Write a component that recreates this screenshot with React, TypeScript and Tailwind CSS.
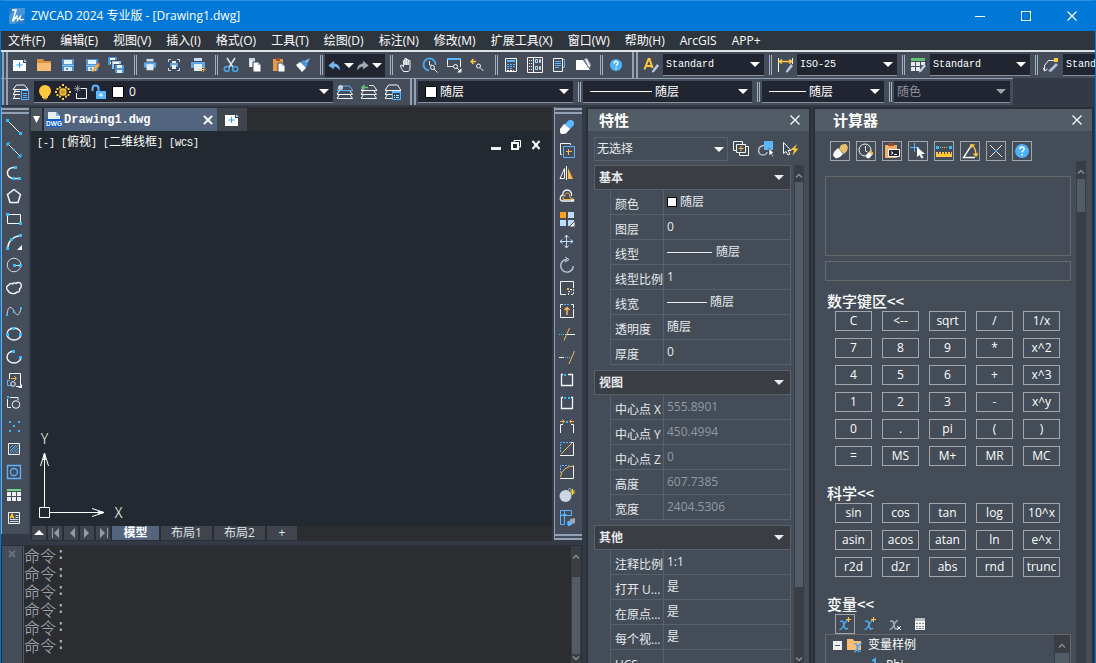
import React from "react";

type IconProps = { children: React.ReactNode; className?: string };

function Ico({ children, className = "size-4" }: IconProps) {
  return (
    <svg viewBox="0 0 16 16" className={`shrink-0 ${className}`} fill="none" stroke="#f4f6f8" strokeWidth="1" aria-hidden="true">
      {children}
    </svg>
  );
}

const B = "#5bb5ff";
const C = "#33bdfc";
const L = "#bfdcf8";
const O = "#f7b64f";
const Y = "#ffc83d";
const W = "#f4f6f8";

function Dots({ at, s = 3 }: { at: number[][]; s?: number }) {
  return (
    <>
      {at.map(([x, y]) => (
        <rect key={`${x}-${y}`} x={x - s / 2} y={y - s / 2} width={s} height={s} fill={C} stroke="none" />
      ))}
    </>
  );
}

const floppy = (
  <g stroke="none">
    <path d="M2 2h12v12H2z" fill="#4b95d8" />
    <path d="M4 3h8v4H4z" fill="#e9f1fa" />
    <path d="M2 8h12v1H2z" fill="#8cc2f2" />
    <path d="M4 10h8v4H4z" fill="#dbe9f7" />
    <path d="M6 11h2v2H6z" fill="#4b95d8" />
  </g>
);
const printer = (
  <g stroke="none">
    <path d="M4 1h8v3H4z" fill="#c5ddf5" />
    <path d="M1 5h14v6H1z" fill="#5fa6e2" />
    <path d="M4 7h8v7H4z" fill="#e0ecf8" />
  </g>
);
const pencil = (
  <g stroke="none">
    <path d="M9 14l5-7 2 2-5 6-2 .5z" fill="#b9cbe4" />
  </g>
);

const I = {
  newFile: (
    <>
      <path d="M1 3h10v3h3v8H1z" fill="#fff" stroke="none" />
      <path d="M12 2l3 3h-3z" fill="#9fc9f3" stroke="none" />
      <path d="M7.500 5v6M4.500 8h6" stroke="#2f9cf0" />
    </>
  ),
  open: (
    <g stroke="none">
      <path d="M1 2h6l1 2h7v10H1z" fill="#dd9243" />
      <path d="M1 6h14v8H1z" fill="#f9bc74" />
    </g>
  ),
  save: floppy,
  saveAs: (
    <>
      {floppy}
      <path d="M8 15l1-3 5-6 2 2-5 6z" fill="#f7a93b" stroke="none" />
      <path d="M13 7l1-2 2 2-1 1z" fill="#e75d4e" stroke="none" />
    </>
  ),
  saveAll: (
    <g stroke="none">
      <path d="M0 0h9v8H0z" fill="#4b95d8" />
      <path d="M2 1h5v2H2zM2 5h2v2H2z" fill="#fff" />
      <path d="M3 3h10v9H3z" fill="#464d5a" />
      <path d="M4 4h9v8H4z" fill="#8cc2f2" />
      <path d="M5 5h6v2H5z" fill="#fff" />
      <path d="M6 7h10v9H6z" fill="#464d5a" />
      <path d="M7 8h9v8H7z" fill="#4b95d8" />
      <path d="M9 8h5v3H9zM9 13h5v3H9z" fill="#e6f0fa" />
    </g>
  ),
  print: printer,
  preview: (
    <>
      <path d="M2.500 5V2.500H5M11 2.500h2.500V5M13.500 11v2.500H11M5 13.500H2.500V11" stroke={L} />
      <path d="M4 6h8v4H4z" fill="#5fa6e2" stroke="none" />
      <path d="M6 4h4v2H6zM6 8h4v4H6z" fill="#e6f0fa" stroke="none" />
    </>
  ),
  publish: (
    <>
      {printer}
      <path d="M9 12.500h5M12.500 10l2.500 2.500-2.500 2.500" stroke={Y} />
    </>
  ),
  cut: (
    <>
      <path d="M4 1l6.500 10M12 1L5.500 11" stroke="#dce3ea" strokeWidth="1.500" />
      <circle cx="3.800" cy="12" r="2.500" stroke="#4da3e8" strokeWidth="1.500" />
      <circle cx="12.200" cy="12" r="2.500" stroke="#4da3e8" strokeWidth="1.500" />
    </>
  ),
  copy: (
    <g stroke="none">
      <path d="M2 1h6v9H2z" fill="#c9d3de" />
      <path d="M3 3h2v7H3z" fill="#f4f6f8" />
      <path d="M6 5h5l3 3v7H6z" fill="#fff" stroke="#464d5a" />
      <path d="M11 5l3 3h-3z" fill="#9eaebf" />
    </g>
  ),
  paste: (
    <g stroke="none">
      <path d="M2 2h10v12H2z" fill="#e39a4a" />
      <path d="M5 1h4v3H5z" fill="#9c5228" />
      <path d="M7 6h4l3 3v6H7z" fill="#fff" stroke="#464d5a" />
      <path d="M11 6l3 3h-3z" fill="#9eaebf" />
    </g>
  ),
  match: (
    <g stroke="none">
      <path d="M15 1l-6 3 3 3z" fill="#77b8ee" />
      <path d="M8 3l5 5-3 3-5-5z" fill="#4b95d8" />
      <path d="M5 5l6 6-4 4-6-7z" fill="#fff" />
    </g>
  ),
  undo: <path d="M14 13c0-5-3-7-7-7V3L1 8l6 4V9c3 0 5 1 7 4z" fill="#79b7f3" stroke="#79b7f3" />,
  redo: <path d="M2 13c0-5 3-7 7-7V3l6 5-6 4V9c-3 0-5 1-7 4z" fill="#a5abb2" stroke="#a5abb2" />,
  pan: (
    <path
      d="M5.500 14.500C4 12 2.500 10.500 2.500 8.500l1.500-.5 1.500 2V3.500l1.500-1V8 1.500h1.500V8 2.500H10V8l.5-4.500H12V11c0 2-1 2.500-1.500 3.500z"
      strokeLinejoin="round"
    />
  ),
  zoomRt: (
    <>
      <path d="M7 13.500A6 6 0 1 1 13.500 8" stroke="#4da3e8" strokeWidth="2" />
      <path d="M7.500 4v4h2" />
      <circle cx="10.500" cy="10.500" r="2" />
      <path d="M12 12l3.500 3.500" />
    </>
  ),
  zoomWin: (
    <>
      <path d="M1.500 8.500V2.500M1 2.500h13M14.500 3v7M1 9.500h6" />
      <path d="M1 2h14" stroke={B} strokeWidth="2" />
      <circle cx="9.500" cy="9.500" r="2" />
      <path d="M11 11l3 3" />
      <path d="M15.500 11v4.500H11z" fill={W} stroke="none" />
    </>
  ),
  zoomPrev: (
    <>
      <path d="M1 4.500h5M3.500 2L1 4.500 3.500 7" stroke={Y} strokeWidth="1.300" />
      <circle cx="8.500" cy="9" r="2" />
      <path d="M10 10.500l3.500 3.500" />
    </>
  ),
  props: (
    <>
      <path d="M2.500 1.500h11v13h-11z" />
      <path d="M4 4h8" stroke={B} strokeWidth="2" />
      <path d="M4 7.500h8M4 9.500h8M4 11.500h6" stroke={B} strokeDasharray="2 1" />
      <path d="M4 13.500h7" strokeDasharray="2 1" />
    </>
  ),
  center: (
    <>
      <path d="M.5.500h15v15H.5zM6.500.500v15" />
      <path d="M2 3.500h3M2 6.500h3M2 9.500h3M2 12.500h3" strokeDasharray="1 1" />
      <path d="M8.500 2.500h2v3h-2zM12.500 2.500h1v3h-1zM8.500 9.500h2v3h-2zM12.500 9.500h1v3h-1z" stroke={L} />
    </>
  ),
  palette: (
    <>
      <path d="M2.500 1.500h9v13h-9z" />
      <path d="M12 2.500h1.500v8H12" stroke={B} />
      <path d="M4 4.500h6M4 6.500h6M4 8.500h6M4 10.500h4" stroke={B} />
    </>
  ),
  markup: (
    <>
      <path d="M1 3h7l7 10H1z" fill="#fff" stroke="none" />
      <path d="M9 2l3-1 4 7-1 3-2-1z" fill="#dfe4ea" stroke="#70777f" />
    </>
  ),
  help: (
    <>
      <circle cx="8" cy="8" r="7" fill="#4fb0fb" stroke="none" />
      <path d="M5.800 6.300c0-3 4.400-3 4.400-.3 0 1.600-2.200 1.700-2.200 3.500M8 11v1.500" strokeWidth="1.500" stroke="#fff" />
    </>
  ),
  textStyle: (
    <>
      <path d="M1.500 12.500L5.500 2h1l3 9M3 9h5" stroke={Y} strokeWidth="2" />
      {pencil}
    </>
  ),
  dimStyle: (
    <>
      <path d="M1.500 1v14M15.500 1v6" />
      <path d="M2 4.500h13M5 2.500l-3 2 3 2M12 2.500l3 2-3 2" stroke={Y} strokeWidth="1.500" />
      {pencil}
    </>
  ),
  tableStyle: (
    <>
      <path d="M1 2.500h14" stroke="#62c276" strokeWidth="3" />
      <path d="M1 5h4v4H1zM6 5h4v4H6zM11 5h4v3h-4zM1 10h4v4H1zM6 10h4v4H6z" fill="#e6e9ec" stroke="none" />
      {pencil}
    </>
  ),
  leader: (
    <>
      <path d="M1.500 14V8.500l4-5h6M.5 11l1 3 3-2" />
      <path d="M11 1h4v4h-4z" fill={Y} stroke="none" />
      <path d="M5 14l8-8 2 2-7 7z" fill="#a9bfdb" stroke="none" />
    </>
  ),
  layers: (
    <>
      <path d="M0 5.500L3.500 1h8L15 5.500zM1 7.500h6M0 10.500h7M2.500 5.500L.5 10.500M0 14.500h7M2.500 10.500l-2 4" />
      <path d="M8.500 6.500h7v9h-7z" fill="#35425a" stroke={B} />
      <path d="M10 9.500h4M10 11.500h4M10 13.500h4" stroke={B} />
    </>
  ),
  bulb: (
    <g stroke="none">
      <circle cx="8" cy="7" r="6" fill={Y} />
      <path d="M5 11h6v3H5z" fill={Y} />
      <path d="M6 14h4v1.500H6z" fill="#c58e1c" />
    </g>
  ),
  sun: (
    <>
      <circle cx="8" cy="8" r="3" stroke={Y} strokeWidth="1.300" fill="#c99a2f" />
      <path d="M7 0h2v2H7zM7 14h2v2H7zM0 7h2v2H0zM14 7h2v2h-2zM4 2.500h2v2H4zM10 2.500h2v2h-2zM4 11.500h2v2H4zM10 11.500h2v2h-2zM1.500 4h2v2h-2zM12.500 4h2v2h-2zM1.500 10h2v2h-2zM12.500 10h2v2h-2z" fill={Y} stroke="none" />
    </>
  ),
  vpFreeze: (
    <>
      <path d="M8 4.500h5.500v10h-10V9" />
      <path d="M4.500 1v7M1 4.500h7M2 2l5 5M7 2L2 7" stroke="#aeb4bd" strokeWidth=".7" />
    </>
  ),
  unlock: (
    <>
      <path d="M1.500 7V4.500a3 3 0 0 1 6 0V7" stroke={B} strokeWidth="2" />
      <path d="M5 7h10v8H5z" fill={B} stroke="none" />
      <path d="M10 9v4M8 11h4" stroke="#fff" />
    </>
  ),
  layCur: (
    <>
      <path d="M0 6.500L3.500 2h9L16 6.500z" stroke={B} />
      <circle cx="3.500" cy="3.500" r="2.500" fill="#c4d0df" stroke="none" />
      <path d="M2.500 6.500L0 10.500h15.500L13 7M2.500 10.500l-2.500 4h15.500l-2.500-4" />
    </>
  ),
  layPrev: (
    <>
      <path d="M8 1.500h4.500L16 6.500H0L2 4M2.500 6.500L0 10.500h15.500L13 7M2.500 10.500l-2.500 4h15.500l-2.500-4" />
      <path d="M1 3.500h6M3.500 1L1 3.500 3.500 6" stroke="#62c276" strokeWidth="1.500" />
    </>
  ),
  layState: (
    <>
      <path d="M0 6.500L3.500 1h9L16 6.500H0M2.500 6.500L0 10.500h7M2.500 10.500l-2.500 4h7" />
      <path d="M7.500 7.500h8v8h-8z" fill="#2d4a6c" stroke={B} />
      <path d="M7 8h9" stroke={B} strokeWidth="2" />
      <path d="M9 11.500h1M11 11.500h3M9 13.500h1M11 13.500h3" stroke={L} />
    </>
  ),
};

const draw: [string, React.ReactNode][] = [
  ["直线", <><path d="M2 2l12 12" /><Dots at={[[1.500, 1.500], [14.500, 14.500]]} /></>],
  ["构造线", <><path d="M1 1l14 14" /><path d="M1 4.500V1h3.500M11.500 15H15v-3.500" stroke={C} /><Dots s={2} at={[[8, 8], [2, 2], [14, 14]]} /></>],
  ["多段线", <><path d="M9 2.500c-10-1-10 11-1 11h6" strokeWidth="1.500" /><Dots at={[[9.500, 2.500], [7.500, 13.500], [13.500, 13.500]]} /></>],
  ["正多边形", <path d="M8 1.500l6.500 5-2.500 8H4l-2.500-8z" strokeWidth="1.500" />],
  ["矩形", <><path d="M1.500 3.500h13v9h-13z" /><Dots at={[[1.500, 3.500], [14.500, 12.500]]} /></>],
  ["圆弧", <><path d="M1.500 14Q3 3 14.500 1.500" strokeWidth="1.500" /><Dots at={[[1.500, 14.500], [5.500, 5.500], [14.500, 1.500]]} /><path d="M16 11v5h-5z" fill="#fff" stroke="none" /></>],
  ["圆", <><circle cx="8" cy="8" r="6.800" stroke="#d3d9df" /><path d="M8 8.500h7" /><Dots at={[[8.500, 8.500], [14.500, 8.500]]} /></>],
  ["修订云线", <path d="M3 5c-3 1-3 4-1 5.500 1 3.500 7 4 9 1.500 2 .5 3-1 2.500-3 2-1 2-3 1.500-5-1-2-4-2-5-.5-1.500-1-3-.5-3.500.5-1.500-1-3.500-.5-3.500 1z" strokeWidth="1.400" />],
  ["样条曲线", <><path d="M1 12C2 1 6 4 8 8s5 7 7-3" stroke="#d3d9df" /><Dots s={2} at={[[1, 12], [8, 9], [15, 5]]} /></>],
  ["椭圆", <><ellipse cx="8" cy="8" rx="7" ry="6" strokeWidth="1.400" /><Dots at={[[1.500, 8.500], [7.500, 2.500], [14.500, 8.500]]} /></>],
  ["椭圆弧", <><path d="M8 2A7 6 0 1 0 15 8" strokeWidth="1.400" /><Dots at={[[7.500, 2.500], [14.500, 8.500]]} /></>],
  ["插入块", <><path d="M3.500 7V1.500h11V13M10 14.500h5" /><path d="M1 8.500h3M1.500 8v5.500h4" stroke={B} /><path d="M5 6.500h5M8 4l2.500 2.500L8 9" stroke={O} /><circle cx="7" cy="12" r="2.300" /><path d="M16 12v4h-4z" fill="#fff" stroke="none" /></>],
  ["创建块", <><path d="M1.500 4v8.500H5M4 2.500h8V5" /><Dots s={2} at={[[2, 2]]} /><circle cx="10" cy="9.500" r="3.800" /></>],
  ["点", <Dots s={2} at={[[4, 4], [13, 4], [8, 8], [4, 13], [13, 13]]} />],
  ["图案填充", <><path d="M2.500 2.500h11v11h-11z" /><path d="M4 7l3-3M4 10l6-6M4 12.500L12.500 4M7 12.500L12.500 7M10 12.500l2.500-2.500" stroke={B} /></>],
  ["面域", <><path d="M1.500 1.500h13v13h-13z" stroke={B} strokeWidth="1.300" /><circle cx="8" cy="8" r="3.500" stroke={B} strokeWidth="1.300" /></>],
  ["表格", <><path d="M1 3h14" stroke="#76d38a" strokeWidth="2" /><path d="M1 5h4v4H1zM6 5h4v4H6zM11 5h4v4h-4zM1 10h4v4H1zM6 10h4v4H6zM11 10h4v4h-4z" fill="#eceef0" stroke="none" /></>],
  ["多行文字", <><path d="M2.500 2.500h11v11h-11z" /><path d="M4 8.500l2-4.500 2 4.500M5 7h2" stroke={Y} strokeWidth="1.300" /><path d="M9.500 5.500h3M9.500 7.500h3M4 9.500h8.500M4 11.500h8.500" stroke={L} /></>],
];

const modify: [string, React.ReactNode][] = [
  ["删除", <g stroke="none"><path d="M10 1h3l2 2v3l-5 5-5-5z" fill={B} /><path d="M5 5l6 5-4 4.500-3 .5H2l-1-2 0-3z" fill="#fff" /></g>],
  ["复制", <><path d="M3 12.500H1.500v-11h10V3" /><path d="M4.500 4.500h11v11h-11z" stroke={B} /><path d="M9.500 7v6M7 9.500h6" stroke={O} /></>],
  ["镜像", <><path d="M5.500 3.500v10h-4.500z" /><path d="M7.500 1v14" /><path d="M9 3v11h5z" fill={O} stroke="none" /></>],
  ["偏移", <><path d="M4 7c-3 0-4 6-.5 6H14.500v-1.500H12M4 8C2 0 14 0 12.500 8" strokeWidth="1.300" /><path d="M4 11.500h9.500c0-2-3-1-3-3.500 1-4-5-4-4.500 0-1 1-2.500 1-2 3.500" stroke={O} /></>],
  ["阵列", <g stroke="none"><path d="M1 1h6v6H1z" fill="#ffa11f" /><path d="M9 1h6v6H9zM1 9h6v6H1zM9 9h6v6H9z" fill={L} /><path d="M16 10v6h-6z" fill="#fff" stroke="#464d5a" /></g>],
  ["移动", <path d="M7.500 1v13M1 7.500h13M5.500 3.500l2-2.500 2 2.500M5.500 11.500l2 2.500 2-2.500M3.500 5.500L1 7.500l2.500 2M11.500 5.500l2.500 2-2.500 2" stroke="#c0ddf8" />],
  ["旋转", <><path d="M8 2.500A6.300 6.300 0 1 0 14.300 9" stroke="#b7c9d8" strokeWidth="1.400" /><path d="M6 0l4 2.500L6 5" stroke={L} /></>],
  ["缩放", <><path d="M7 14.500H1.500v-13h13V8" /><path d="M8 8h2v2H8z" fill={O} stroke="none" /><path d="M9.500 15v-3.500h3M11 9.500h3.500v3M12 14.500h2.500v-2" strokeDasharray="2 1" /></>],
  ["拉伸", <><path d="M1.500 6v8.500h13V6" /><path d="M4 1.500H1.500V5M12 1.500h2.500V5" /><path d="M5 1.500h6" stroke={B} strokeDasharray="2 1" /><path d="M8 12V5M5.500 7L8 4.500 10.500 7" stroke={O} strokeWidth="1.500" /></>],
  ["修剪", <><path d="M0 8.500h7" stroke={B} strokeDasharray="1 1" /><path d="M8 8.500h8" /><path d="M5 14.500L10.500 2" stroke={O} /></>],
  ["延伸", <><path d="M0 8.500h5" /><path d="M6 8.500h5" stroke={B} strokeDasharray="1 1" /><path d="M10 15l5.500-13" stroke={O} /></>],
  ["打断于点", <><path d="M4 2.500H2.500v11h11v-11H9" strokeWidth="1.300" /><Dots s={2} at={[[6, 3]]} /></>],
  ["打断", <><path d="M4 2.500H2.500v11h11v-11H12" strokeWidth="1.300" /><Dots s={2} at={[[6, 3], [10, 3]]} /></>],
  ["合并", <><path d="M1.500 15V6.500H4M14.500 15V6.500H12" /><path d="M1 3.500h4M3.500 1.500l2 2-2 2M15 3.500h-4M12.500 1.500l-2 2 2 2" stroke={O} /><Dots s={2} at={[[8, 4]]} /></>],
  ["倒角", <><path d="M1 14.500h13.500V1.500H12" /><path d="M1.500 11V1.500H12" stroke={B} strokeDasharray="2 1" /><path d="M2 13L13 2" stroke={O} /></>],
  ["圆角", <><path d="M1 14.500h13.500V1.500" /><path d="M1.500 9V1.500H10" stroke={B} strokeDasharray="2 1" /><path d="M1.500 13Q3 3 14 2" stroke={O} /></>],
  ["分解", <><circle cx="6.500" cy="9" r="6" fill="#c9d6e6" stroke="none" /><path d="M9 4c0-3 3-3 4-1" stroke="#aab4c0" /><path d="M13.500 2v6M11 5h5M11.500 3l4 4M15.500 3l-4 4" stroke={Y} /></>],
  ["编辑块", <><path d="M1.500.500h11v5h-11zM1.500.500v14h4v-14" stroke={B} /><path d="M5.500 2v4M3.500 4.500h4" stroke={B} /><path d="M8 13c0-2 3-3 5-2l1 2-3 3H9z" fill={B} stroke="none" /><path d="M11 9l5-1v5l-3 1-2-3z" fill="#9fa6ae" stroke="none" /></>],
];

function Arrow({ className = "text-white" }: { className?: string }) {
  return (
    <svg viewBox="0 0 10 5" className={`h-[5px] w-[10px] shrink-0 ${className}`} aria-hidden="true">
      <path d="M0 0h10L5 5z" fill="currentColor" />
    </svg>
  );
}

function Tool({ label, children, small = false }: { label: string; children: React.ReactNode; small?: boolean }) {
  return (
    <button type="button" aria-label={label} title={label} className="flex h-full w-6 shrink-0 items-center justify-center hover:bg-white/10">
      <Ico className={small ? "size-[14px]" : "size-4"}>{children}</Ico>
    </button>
  );
}

function Sep() {
  return <span className="mr-px ml-[5px] h-5 w-[3px] shrink-0 border-x border-[#a3b1c5]" />;
}

function Grip() {
  return <span className="h-full w-[6px] shrink-0 border-x-2 border-[#93a1b5]" />;
}

type ComboProps = {
  label: string;
  value: string;
  className: string;
  lead?: React.ReactNode;
  mono?: boolean;
  disabled?: boolean;
};

function Combo({ label, value, className, lead, mono = false, disabled = false }: ComboProps) {
  return (
    <label className={`flex h-[22px] items-center border-b border-[#8a8f99] bg-[#202531] pr-1 ${className}`}>
      {lead}
      <select
        aria-label={label}
        disabled={disabled}
        className={`h-full min-w-0 flex-1 appearance-none bg-transparent pl-[3px] outline-none ${
          mono ? "font-['Liberation_Mono','Noto_Sans_CJK_SC',monospace] text-[10px]" : "text-xs"
        } ${disabled ? "text-[#8d929b]" : "text-white"}`}
      >
        <option>{value}</option>
      </select>
      <Arrow className={disabled ? "text-[#9fa3aa]" : "text-white"} />
    </label>
  );
}

function Swatch({ className }: { className: string }) {
  return <span className={`shrink-0 border border-black bg-white ${className}`} />;
}

function Chevron({ up = false }: { up?: boolean }) {
  return (
    <svg viewBox="0 0 8 5" className="h-[5px] w-2 shrink-0" fill="none" stroke="#858d97" aria-hidden="true">
      {up ? <path d="M1 4.500l3-3 3 3" strokeWidth="1.500" /> : <path d="M1 .5l3 3 3-3" strokeWidth="1.500" />}
    </svg>
  );
}

function Cross({ className }: { className: string }) {
  return (
    <svg viewBox="0 0 10 10" className={`shrink-0 ${className}`} stroke="currentColor" strokeWidth="1.200" fill="none" aria-hidden="true">
      <path d="M.5.500l9 9M9.500.500l-9 9" />
    </svg>
  );
}

const menus = ["文件(F)", "编辑(E)", "视图(V)", "插入(I)", "格式(O)", "工具(T)", "绘图(D)", "标注(N)", "修改(M)", "扩展工具(X)", "窗口(W)", "帮助(H)", "ArcGIS", "APP+"];

function TitleBar() {
  return (
    <header className="flex h-[31px] shrink-0 items-center border-t border-[#2a8ede] bg-[#0078d7] pl-2 text-xs text-white">
      <svg viewBox="0 0 16 16" className="size-4 shrink-0" aria-hidden="true">
        <path d="M0 0h16v16H0z" fill="#2a7dcb" />
        <path d="M5 0h11v5L6 16H0V8z" fill="#5fa3dc" opacity=".6" />
        <path d="M3 2h4L3.500 13.500l5-6" stroke="#fff" strokeWidth="1.500" fill="none" />
        <path d="M7.500 7.500l1 5 3.500-5M12 7.500c-2 3-1 6 3 3.500" stroke="#fff" strokeWidth="1.200" fill="none" />
      </svg>
      <h1 className="ml-[6px] flex-1">ZWCAD 2024 专业版 - [Drawing1.dwg]</h1>
      <button type="button" aria-label="最小化" className="flex h-full w-[46px] items-center justify-center">
        <span className="h-px w-[10px] bg-white" />
      </button>
      <button type="button" aria-label="最大化" className="flex h-full w-[46px] items-center justify-center">
        <span className="size-[10px] border border-white" />
      </button>
      <button type="button" aria-label="关闭" className="flex h-full w-[46px] items-center justify-center">
        <Cross className="size-[10px]" />
      </button>
    </header>
  );
}

function StandardBar() {
  return (
    <div className="flex h-[26px] min-w-0 items-center overflow-hidden bg-[#464d5a] pl-px">
      <Grip />
      <Tool label="新建">{I.newFile}</Tool>
      <Tool label="打开">{I.open}</Tool>
      <Tool label="保存">{I.save}</Tool>
      <Tool label="另存为">{I.saveAs}</Tool>
      <Tool label="全部保存">{I.saveAll}</Tool>
      <span className="w-px shrink-0" />
      <Sep />
      <Tool label="打印" small>{I.print}</Tool>
      <Tool label="打印预览">{I.preview}</Tool>
      <Tool label="发布">{I.publish}</Tool>
      <Sep />
      <Tool label="剪切">{I.cut}</Tool>
      <Tool label="复制">{I.copy}</Tool>
      <Tool label="粘贴">{I.paste}</Tool>
      <Tool label="特性匹配">{I.match}</Tool>
      <Sep />
      <div className="ml-px flex h-[23px] w-[60px] shrink-0 items-center justify-between bg-[#202531] px-[3px]">
        <button type="button" aria-label="放弃"><Ico className="size-[13px]">{I.undo}</Ico></button>
        <button type="button" aria-label="放弃列表"><Arrow /></button>
        <button type="button" aria-label="重做"><Ico className="size-[13px]">{I.redo}</Ico></button>
        <button type="button" aria-label="重做列表"><Arrow /></button>
      </div>
      <Sep />
      <Tool label="平移">{I.pan}</Tool>
      <Tool label="实时缩放">{I.zoomRt}</Tool>
      <Tool label="窗口缩放">{I.zoomWin}</Tool>
      <Tool label="缩放上一个">{I.zoomPrev}</Tool>
      <Sep />
      <Tool label="特性">{I.props}</Tool>
      <Tool label="设计中心">{I.center}</Tool>
      <Tool label="工具选项板">{I.palette}</Tool>
      <Tool label="清理">{I.markup}</Tool>
      <Sep />
      <Tool label="帮助" small>{I.help}</Tool>
      <span className="w-1 shrink-0" />
      <Grip />
      <span className="w-px shrink-0" />
      <Tool label="文字样式">{I.textStyle}</Tool>
      <Combo label="文字样式列表" value="Standard" mono className="w-[101px] shrink-0" />
      <Sep />
      <Tool label="标注样式">{I.dimStyle}</Tool>
      <Combo label="标注样式列表" value="ISO-25" mono className="w-[100px] shrink-0" />
      <Sep />
      <Tool label="表格样式">{I.tableStyle}</Tool>
      <Combo label="表格样式列表" value="Standard" mono className="w-[100px] shrink-0" />
      <Sep />
      <Tool label="多重引线样式">{I.leader}</Tool>
      <Combo label="多重引线样式列表" value="Standard" mono className="w-[100px] shrink-0" />
    </div>
  );
}

function LayerBar() {
  return (
    <div className="flex h-[27px] w-fit max-w-full items-center overflow-hidden border-t border-[#93a1b5] bg-[#464d5a] pr-[3px] pl-px">
      <Grip />
      <span className="w-px shrink-0" />
      <Tool label="图层特性">{I.layers}</Tool>
      <Combo
        label="图层"
        value="0"
        className="ml-px w-[299px] shrink-0"
        lead={
          <span className="flex items-center gap-[2px] pl-[3px]">
            <Ico>{I.bulb}</Ico>
            <Ico>{I.sun}</Ico>
            <Ico>{I.vpFreeze}</Ico>
            <Ico>{I.unlock}</Ico>
            <Swatch className="mr-[2px] ml-[3px] size-3" />
          </span>
        }
      />
      <Tool label="置为当前图层">{I.layCur}</Tool>
      <Tool label="上一个图层">{I.layPrev}</Tool>
      <Tool label="图层状态">{I.layState}</Tool>
      <span className="w-[5px] shrink-0" />
      <Grip />
      <Combo label="颜色" value="随层" className="ml-[2px] w-[155px] shrink-0" lead={<Swatch className="ml-[7px] size-3" />} />
      <Sep />
      <Combo label="线型" value="随层" className="ml-px w-[169px] shrink-0" lead={<span className="ml-[7px] h-px w-[62px] bg-white" />} />
      <Sep />
      <Combo label="线宽" value="随层" className="ml-px w-[122px] shrink-0" lead={<span className="ml-[7px] h-px w-[37px] bg-white" />} />
      <Sep />
      <Combo label="打印样式" value="随色" disabled className="ml-px w-[116px] shrink-0" />
    </div>
  );
}

function ToolStrip({ items, label, closed = false }: { items: [string, React.ReactNode][]; label: string; closed?: boolean }) {
  return (
    <nav aria-label={label} className="flex w-7 shrink-0 flex-col items-center self-start border-l border-[#93a1b5] bg-[#464d5a]">
      <span className="mt-px h-[6px] w-full border-y-2 border-[#93a1b5]" />
      {items.map(([name, art]) => (
        <button key={name} type="button" aria-label={name} title={name} className="mr-[3px] flex h-[23px] w-6 items-start justify-center pt-[5px] hover:bg-white/10">
          <Ico>{art}</Ico>
        </button>
      ))}
      <span className={closed ? "mt-[6px] h-[6px] w-full border-y-2 border-[#93a1b5]" : "h-[6px]"} />
    </nav>
  );
}

function Drawing() {
  return (
    <main className="mx-[2px] flex min-w-0 flex-1 flex-col bg-[#222930]">
      <div className="flex h-6 shrink-0 items-stretch bg-[#2b2d30] pt-px">
        <button type="button" aria-label="文档列表" className="flex w-[11px] items-center justify-center bg-[#4c545e] text-white">
          <svg viewBox="0 0 7 7" className="size-[7px]" aria-hidden="true"><path d="M0 0h7L3.500 7z" fill="currentColor" /></svg>
        </button>
        <div className="ml-[2px] flex w-[173px] items-center bg-[#53647f] px-[2px] text-white">
          <svg viewBox="0 0 16 16" className="size-4 shrink-0 overflow-visible" aria-hidden="true">
            <path d="M2 0h8l4 4v8H2z" fill="#e8eef5" />
            <path d="M10 0l4 4h-4z" fill="#6fb2ef" />
            <path d="M0 7h16v8H0z" fill="#0b5fd0" />
            <text x="8" y="13.500" textAnchor="middle" fontSize="6.500" fontWeight="700" fontFamily="Liberation Sans" fill="#fff">DWG</text>
          </svg>
          <span className="ml-[2px] flex-1 font-['Liberation_Mono',monospace] text-xs font-bold">Drawing1.dwg</span>
          <button type="button" aria-label="关闭文档" className="mr-[2px]">
            <svg viewBox="0 0 10 10" className="size-[10px]" stroke="#fff" strokeWidth="2" aria-hidden="true"><path d="M1 1l8 8M9 1L1 9" /></svg>
          </button>
        </div>
        <button type="button" aria-label="新建文档" className="flex w-[30px] items-center justify-center bg-[#3f444d]">
          <Ico>{I.newFile}</Ico>
        </button>
      </div>
      <div className="flex min-h-0 flex-1 flex-col justify-between">
        <div className="flex items-start justify-between pr-[11px] pl-[6px] text-white">
          <p className="pt-px font-['Liberation_Mono',monospace] text-[10px] leading-[18px] whitespace-pre">
            {"[-] ["}
            <span className="font-['Noto_Sans_CJK_SC',sans-serif] text-xs leading-[18px]">俯视</span>
            {"] ["}
            <span className="font-['Noto_Sans_CJK_SC',sans-serif] text-xs leading-[18px]">二维线框</span>
            {"] [WCS]"}
          </p>
          <div className="flex items-center gap-[10px] pt-[9px]">
            <button type="button" aria-label="最小化窗口" className="flex size-[10px] items-end"><span className="h-[3px] w-full bg-[#eceef0]" /></button>
            <button type="button" aria-label="还原窗口">
              <svg viewBox="0 0 10 10" className="size-[10px]" fill="none" stroke="#fff" aria-hidden="true"><path d="M3 2V.5h6.500V7H8" /><path d="M1 3h6v6H1z" strokeWidth="2" /></svg>
            </button>
            <button type="button" aria-label="关闭窗口">
              <svg viewBox="0 0 10 10" className="size-[10px]" stroke="#fff" strokeWidth="2" aria-hidden="true"><path d="M1.500 1l7 8M8.500 1l-7 8" /></svg>
            </button>
          </div>
        </div>
        <svg viewBox="0 0 90 90" className="mb-[6px] ml-[6px] h-[90px] w-[90px] overflow-visible" fill="none" stroke="#fff" aria-hidden="true">
          <path d="M2.500 77.500h10v10h-10zM7.500 77.500V23M12.500 82.500H67" />
          <path d="M3.500 36l4-13 4 13M6.500 30l1-7 1 7M55 78.500l12 4-12 4M61 81.500l6 1-6 1" />
          <text x="7.500" y="14" textAnchor="middle" fontSize="15" fontWeight="300" fontFamily="Noto Sans CJK SC" fill="#fff" stroke="none">Y</text>
          <text x="81.500" y="88" textAnchor="middle" fontSize="15" fontWeight="300" fontFamily="Noto Sans CJK SC" fill="#fff" stroke="none">X</text>
        </svg>
      </div>
      <div className="flex h-[15px] shrink-0 gap-[2px] bg-[#2b2d30] pb-px pl-px text-xs leading-[14px] text-[#dfe3e8]">
        {[
          ["展开", "M2 9l5-5 5 5z", "#fff"],
          ["第一个", "M4 2h1v10H4zM11 2v10L6 7z", "#959ba6"],
          ["上一个", "M11 2v10L6 7z", "#959ba6"],
          ["下一个", "M4 2v10l5-5z", "#959ba6"],
          ["最后一个", "M11 2h1v10h-1zM4 2v10l5-5z", "#959ba6"],
        ].map(([name, d, fill]) => (
          <button key={name} type="button" aria-label={name} className="size-[14px] bg-[#3f444d]">
            <svg viewBox="0 0 14 14" className="size-[14px]" aria-hidden="true"><path d={d} fill={fill} /></svg>
          </button>
        ))}
        <button type="button" className="w-[47px] bg-[#53647f] font-bold text-white">模型</button>
        <button type="button" className="w-[51px] bg-[#3f444d]">布局1</button>
        <button type="button" className="w-[51px] bg-[#3f444d]">布局2</button>
        <button type="button" aria-label="新建布局" className="w-[30px] bg-[#3f444d]">+</button>
      </div>
    </main>
  );
}

function CommandLine() {
  return (
    <section aria-label="命令行" className="flex h-[118px] shrink-0 border-t border-[#2b2f37] bg-[#2b2d31]">
      <div className="ml-px w-5 shrink-0 bg-[#464d5a] pt-1">
        <button type="button" aria-label="关闭命令行" className="mx-auto block size-2">
          <svg viewBox="0 0 8 8" className="size-2" stroke="#6b727c" strokeWidth="2" aria-hidden="true"><path d="M1 1l6 6M7 1L1 7" /></svg>
        </button>
      </div>
      <div className="ml-px flex-1 border-l border-[#565c66] font-['Noto_Sans_CJK_SC',sans-serif] text-base leading-[18px] font-light text-[#b3bac5]">
        {[0, 1, 2, 3, 4, 5].map((n) => (
          <p key={n} className="flex h-[18px] items-center">命令<span className="font-['Liberation_Mono',monospace]">:</span></p>
        ))}
      </div>
      <div className="mr-px flex w-[10px] flex-col items-center bg-[#3a3d43] pt-2">
        <Chevron up />
        <span className="mt-[18px] w-2 flex-1 bg-[#525c67]" />
        <span className="flex h-[9px] items-center"><Chevron /></span>
      </div>
    </section>
  );
}

type Row = [string, React.ReactNode, boolean?];
const sections: [string, Row[]][] = [
  ["基本", [
    ["颜色", <><Swatch className="mr-[3px] size-[10px]" />随层</>],
    ["图层", "0"],
    ["线型", <><span className="mr-1 h-px w-[45px] bg-[#e7eaee]" />随层</>],
    ["线型比例", "1"],
    ["线宽", <><span className="mr-[3px] h-px w-10 bg-[#e7eaee]" />随层</>],
    ["透明度", "随层"],
    ["厚度", "0"],
  ]],
  ["视图", [
    ["中心点 X", "555.8901", true],
    ["中心点 Y", "450.4994", true],
    ["中心点 Z", "0", true],
    ["高度", "607.7385", true],
    ["宽度", "2404.5306", true],
  ]],
  ["其他", [
    ["注释比例", "1:1"],
    ["打开 U...", "是"],
    ["在原点...", "是"],
    ["每个视...", "是"],
    ["UCS ...", ""],
  ]],
];

function PanelTitle({ title, className }: { title: string; className: string }) {
  return (
    <div className={`flex h-[22px] shrink-0 items-center justify-between bg-[#515c67] text-white ${className}`}>
      <h2 className="text-[15px] leading-[22px] font-bold">{title}</h2>
      <button type="button" aria-label={`关闭${title}`}><Cross className="size-[10px]" /></button>
    </div>
  );
}

function Properties() {
  return (
    <aside className="ml-1 flex w-[225px] shrink-0 flex-col overflow-hidden border-2 border-b-0 border-[#2b2f37] bg-[#434c57] text-xs text-[#e7eaee]">
      <PanelTitle title="特性" className="pr-[9px] pl-[11px]" />
      <div className="mt-[6px] flex shrink-0 items-center pl-[6px]">
        <label className="flex h-6 w-[134px] items-center border border-[#56616c] pr-[3px]">
          <select aria-label="选择对象" className="h-full min-w-0 flex-1 appearance-none bg-transparent pl-[2px] text-xs outline-none">
            <option>无选择</option>
          </select>
          <Arrow />
        </label>
        <div className="ml-[5px] flex gap-[9px]">
          <button type="button" aria-label="切换 PICKADD"><Ico><path d="M3 9.500H.5v-9h9V3M13 5.500h2.500v9h-9V12" /><path d="M3.500 3.500h9v8h-9z" /><path d="M8 5v5M5.500 7.500h5" stroke={O} /></Ico></button>
          <button type="button" aria-label="选择对象"><Ico><path d="M6 4.500C-1 5-1 14 5 14c3 0 4-2 4-3" stroke="#b9c4d0" strokeWidth="1.400" /><path d="M6 0h9v9H6z" fill={B} stroke="none" /><path d="M11 7v8l2-2 1.500 3 1-.5L14 12.500h2z" fill="#fff" stroke="#333b46" strokeWidth=".6" /></Ico></button>
          <button type="button" aria-label="快速选择"><Ico><path d="M.5 1.500v11l2.500-2 2 3.500 2-1-2-3.500h3z" /><path d="M14 3L7.500 9h3.500l-1.500 5.500 6-7H12z" fill={Y} stroke="none" /></Ico></button>
        </div>
      </div>
      <div className="mt-1 flex min-h-0 flex-1">
        <div className="flex h-0 min-h-full w-[203px] flex-col gap-[5px] overflow-hidden pl-[6px]">
          {sections.map(([title, rows]) => (
            <section key={title} className="shrink-0">
              <h3 className="flex h-[25px] items-center justify-between border border-[#56616c] bg-[#3a3d43] pr-[6px] pl-1 font-bold">
                {title}<Arrow className="text-[#e7eaee]" />
              </h3>
              <table className="ml-4 w-[181px] table-fixed border-separate border-spacing-0 border-l border-[#56616c]">
                <tbody>
                  {rows.map(([name, value, muted]) => (
                    <tr key={name} className="h-[25px]">
                      <th scope="row" className="w-[53px] overflow-hidden border-r border-b border-[#56616c] p-0 pt-[6px] pl-1 text-left leading-[18px] font-normal whitespace-nowrap">{name}</th>
                      <td className="border-r border-b border-[#56616c] p-0 pl-[3px]">
                        <span className={`flex h-6 items-center ${muted ? "text-[#929aa4]" : ""}`}>{value}</span>
                      </td>
                    </tr>
                  ))}
                </tbody>
              </table>
            </section>
          ))}
        </div>
        <div className="ml-[3px] flex w-[10px] flex-col items-center bg-[#3a3d43] pt-2">
          <Chevron up />
          <span className="mt-1 w-2 flex-1 bg-[#525c67]" />
          <span className="flex h-[76px] items-end pb-px"><Chevron /></span>
        </div>
      </div>
    </aside>
  );
}

const calcTools: [string, React.ReactNode][] = [
  ["清除", <g stroke="none"><path d="M9 2l3-1h2l2 3-1 4-3 3-5-5z" fill="#e8bd6e" /><path d="M6 5l5 6-3 3-4 1.500L1 12.500 2 9z" fill="#fff" /></g>],
  ["清除历史", <><circle cx="7" cy="7" r="6" /><path d="M7.500 3v5l2 1" /><path d="M8 12l4-4 3 3-4 4.500-2.500-.5z" fill="#fff" stroke="none" /><path d="M11 9l2-1.500 2.500 2.500-2 2z" fill={O} stroke="none" /></>],
  ["粘贴到命令行", <g stroke="none"><path d="M1 2h12v13H1z" fill="#f3ad66" /><path d="M4 0h6v3H4z" fill="#93502f" /><path d="M4.500 6.500h11v7h-11z" fill="#24292f" stroke="#fff" /><path d="M7 8.500l2 1.500-2 1.500M10 11.500h3" stroke="#fff" /></g>],
  ["获取坐标", <><path d="M4.500 0v9M0 4.500h9" stroke={B} /><path d="M7 4v10l2.500-2 2 3.500 2-1-2-3.500H15z" fill="#fff" stroke="none" /></>],
  ["两点距离", <><path d="M4 4.500h8" stroke={Y} strokeDasharray="1 1" /><Dots at={[[1.500, 4.500], [14.500, 4.500]]} /><path d="M0 9h16v5H0z" fill={Y} stroke="none" /><path d="M2.500 9v2M5.500 9v2M8.500 9v2M11.500 9v2M14.500 9v2" stroke="#464d5a" /></>],
  ["角度", <><path d="M10 1.500L1.500 14.500H13" strokeWidth="1.400" /><path d="M10 2.500c3 2 4 6 4 10M9 5V2h3.500M11.500 10.500l2.500 2.500 2-2.500" stroke={Y} strokeWidth="1.400" /></>],
  ["交点", <><path d="M2 2l12 12M14 2L2 14" /><path d="M7 7h2v2H7z" fill={B} stroke="none" /></>],
  ["帮助", I.help],
];

const numKeys = ["C", "<--", "sqrt", "/", "1/x", "7", "8", "9", "*", "x^2", "4", "5", "6", "+", "x^3", "1", "2", "3", "-", "x^y", "0", ".", "pi", "(", ")", "=", "MS", "M+", "MR", "MC"];
const sciKeys = ["sin", "cos", "tan", "log", "10^x", "asin", "acos", "atan", "ln", "e^x", "r2d", "d2r", "abs", "rnd", "trunc"];

function Keys({ keys }: { keys: string[] }) {
  return (
    <div className="ml-[10px] grid w-fit grid-cols-[repeat(5,37px)] gap-x-[10px] gap-y-[7px]">
      {keys.map((k) => (
        <button key={k} type="button" className="h-5 border border-[#a3a5a8] leading-[18px] text-white hover:bg-white/10">{k}</button>
      ))}
    </div>
  );
}

function Heading({ children, className }: { children: string; className: string }) {
  return (
    <h3 className={`ml-[2px] h-[18px] font-['Noto_Sans_CJK_SC',sans-serif] text-[15px] leading-[15px] font-medium text-white ${className}`}>{children}</h3>
  );
}

function VarX({ plus = false, muted = false }: { plus?: boolean; muted?: boolean }) {
  return (
    <Ico>
      <path d="M3 5.500c3-1.500 3.500 0 4 3.500s1.500 5.500 4 3M11 4.500C7 4 7 14 2.500 13.500" stroke={muted ? "#a5abb2" : "#4fa9ec"} strokeWidth="1.500" />
      {plus && <path d="M11.500 1v5M9 3.500h5" stroke={Y} />}
      {muted && <path d="M10 10l4 4M14 10l-4 4" />}
    </Ico>
  );
}

function Calculator() {
  return (
    <aside className="ml-[2px] flex w-[281px] shrink-0 flex-col overflow-hidden border-2 border-b-0 border-[#2b2f37] bg-[#434c57] text-xs text-[#e7eaee]">
      <PanelTitle title="计算器" className="pr-[10px] pl-[18px]" />
      <div className="flex min-h-0 flex-1">
        <div className="flex h-0 min-h-full w-[256px] flex-col overflow-hidden pl-[10px]">
          <div className="mt-[10px] ml-[5px] flex shrink-0 gap-[6px]">
            {calcTools.map(([name, art]) => (
              <button key={name} type="button" aria-label={name} title={name} className="flex size-5 items-center justify-center border border-[#a3a5a8]"><Ico>{art}</Ico></button>
            ))}
          </div>
          <textarea aria-label="历史记录" readOnly className="mt-[15px] h-20 w-full shrink-0 resize-none border border-[#67676a] bg-transparent outline-none" />
          <input aria-label="表达式" className="mt-[5px] h-5 w-full shrink-0 border border-[#67676a] bg-transparent px-1 outline-none" />
          <Heading className="mt-3">{"数字键区<<"}</Heading>
          <Keys keys={numKeys} />
          <Heading className="mt-[19px]">{"科学<<"}</Heading>
          <Keys keys={sciKeys} />
          <Heading className="mt-[19px]">{"变量<<"}</Heading>
          <div className="ml-[10px] flex h-5 shrink-0 gap-[5px]">
            <button type="button" aria-label="新建变量" className="flex size-5 items-center justify-center border border-[#a3a5a8]"><VarX plus /></button>
            <button type="button" aria-label="编辑变量" className="flex size-5 items-center justify-center"><VarX plus /></button>
            <button type="button" aria-label="删除变量" className="flex size-5 items-center justify-center"><VarX muted /></button>
            <button type="button" aria-label="返回变量" className="flex size-5 items-center justify-center">
              <Ico><path d="M3 2h10v12H3z" fill="#f2f2f2" stroke="none" /><path d="M3 3.500h10" stroke="#b9bcc0" strokeWidth="3" /><path d="M4 7.500h2M4 10.500h2M4 12.500h2M7 7.500h2M7 10.500h2M7 12.500h2M10 7.500h2M10 10.500h2M10 12.500h2" stroke="#85898f" /></Ico>
            </button>
          </div>
          <div className="flex min-h-0 flex-1 border border-b-0 border-[#67676a]">
            <ul className="flex-1 pl-[7px] leading-[18px] text-white">
              <li className="flex h-5 items-center">
                <button type="button" aria-label="折叠" className="flex size-[9px] items-center justify-center bg-[#eceef0]"><span className="h-px w-[5px] bg-[#3a5fa0]" /></button>
                <svg viewBox="0 0 16 16" className="ml-[5px] size-4" fill="none" aria-hidden="true">
                  <path d="M0 2h6l1 2h7v9H0z" fill="#fbbd74" />
                  <path d="M7 7c3-1 3 1 3.500 4s1 4 3 3M15 6c-4 0-4 9-8 9" stroke="#4fa9ec" strokeWidth="1.600" />
                </svg>
                <span className="ml-[5px]">变量样例</span>
              </li>
              <li className="flex h-5 items-center pl-[35px]">
                <svg viewBox="0 0 12 16" className="h-4 w-3" aria-hidden="true"><path d="M4 4l3-2v12" stroke="#4fa9ec" strokeWidth="2" fill="none" /></svg>
                <span className="ml-[6px]">Phi</span>
              </li>
            </ul>
            <div className="flex w-4 flex-col items-center bg-[#3a3d43] pt-2">
              <Chevron up />
              <span className="mt-[5px] w-[14px] flex-1 bg-[#525c67]" />
            </div>
          </div>
        </div>
        <div className="mt-[30px] ml-[5px] flex w-[10px] flex-col items-center bg-[#3a3d43] pt-2">
          <Chevron up />
          <span className="mt-[5px] h-[33px] w-2 bg-[#525c67]" />
        </div>
      </div>
    </aside>
  );
}

export default function App() {
  return (
    <div className="flex h-screen flex-col overflow-hidden border-x border-[#0078d7] bg-[#333945] font-['Open_Sans','Noto_Sans_CJK_SC',sans-serif]">
      <TitleBar />
      <nav aria-label="菜单" className="flex h-[19px] shrink-0 items-center gap-px overflow-hidden bg-[#2f353c] text-xs text-white">
        {menus.map((m) => (
          <button key={m} type="button" className="shrink-0 px-[7px] leading-[19px] hover:bg-white/10">{m}</button>
        ))}
      </nav>
      <div className="shrink-0 border-t-2 border-[#dfe3e8]">
        <StandardBar />
        <LayerBar />
      </div>
      <div className="mt-[2px] flex min-h-0 flex-1">
        <div className="flex min-w-0 flex-1 flex-col">
          <div className="mb-1 flex min-h-0 flex-1">
            <ToolStrip items={draw} label="绘图" />
            <Drawing />
            <ToolStrip items={modify} label="修改" closed />
          </div>
          <CommandLine />
        </div>
        <Properties />
        <Calculator />
        <span className="w-px shrink-0" />
      </div>
    </div>
  );
}
